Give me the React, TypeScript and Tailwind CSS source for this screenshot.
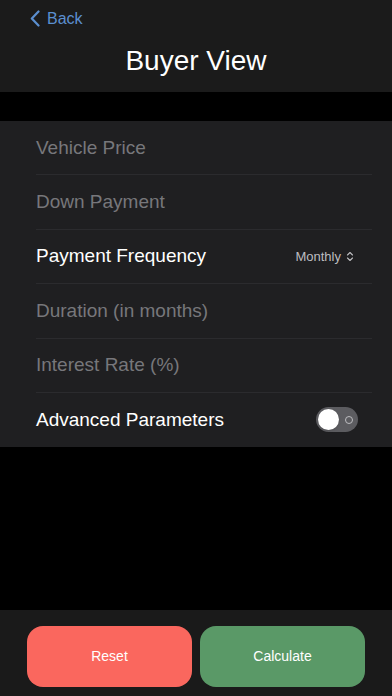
import { ChevronsUpDown } from 'lucide-react';

const rows = [
  { label: 'Vehicle Price', placeholder: true },
  { label: 'Down Payment', placeholder: true },
  { label: 'Payment Frequency', placeholder: false, picker: 'Monthly' },
  { label: 'Duration (in months)', placeholder: true },
  { label: 'Interest Rate (%)', placeholder: true },
  { label: 'Advanced Parameters', placeholder: false, toggle: true },
];

export default function App() {
  return (
    <div
      className="w-[392px] h-[696px] bg-black flex flex-col overflow-hidden"
      style={{ fontFamily: '"Liberation Sans", Arial, sans-serif' }}
    >
      {/* Nav bar */}
      <div className="h-[92px] bg-[#1b1b1b] flex flex-col">
        <div className="h-[36px] flex items-center pl-[30px] pt-[1px]">
          <button className="flex items-center text-[#5b8fd0] text-[16px]">
            <svg width="10" height="17" viewBox="0 0 10 17" fill="none">
              <path d="M8.5 1.5L1.8 8.5L8.5 15.5" stroke="#5b8fd0" strokeWidth="2.2" strokeLinecap="round" strokeLinejoin="round" />
            </svg>
            <span className="ml-[7px]">Back</span>
          </button>
        </div>
        <h1 className="text-center text-white text-[28px] leading-[34px] mt-[8px]">Buyer View</h1>
      </div>

      <div className="h-[29px]" />

      {/* Form */}
      <div className="bg-[#1f1f21] pl-[36px] pr-[20px]">
        {rows.map((row, i) => (
          <div
            key={row.label}
            className={`flex items-center justify-between pr-[14px] ${
              i === rows.length - 1 ? 'h-[54px]' : 'h-[54.4px] border-b border-[#2b2b2e]'
            } ${i === 0 ? 'pt-[1px]' : ''}`}
          >
            <span className={`text-[19px] ${row.placeholder ? 'text-[#77777b]' : 'text-white'}`}>
              {row.label}
            </span>
            {row.picker && (
              <span className="flex items-center text-[13px] text-[#bdbdc0] pr-[2px]">
                {row.picker}
                <ChevronsUpDown className="w-[12px] h-[13px] ml-[3px]" strokeWidth={2.2} />
              </span>
            )}
            {row.toggle && (
              <div className="w-[42px] h-[25px] rounded-full bg-[#5c5c60] flex items-center px-[2px]">
                <div className="w-[21px] h-[21px] rounded-full bg-white shadow" />
                <div className="ml-[6px] w-[8px] h-[8px] rounded-full border-[1.5px] border-[#bdbdc0]" />
              </div>
            )}
          </div>
        ))}
      </div>

      <div className="flex-1" />

      {/* Bottom actions */}
      <div className="h-[86px] bg-[#1a1a1a] flex gap-[8px] px-[27px] pt-[16px]">
        <button className="flex-1 h-[61px] rounded-[16px] bg-[#fa675e] text-white text-[14px]">Reset</button>
        <button className="flex-1 h-[61px] rounded-[16px] bg-[#5a9967] text-white text-[14px]">Calculate</button>
      </div>
    </div>
  );
}
